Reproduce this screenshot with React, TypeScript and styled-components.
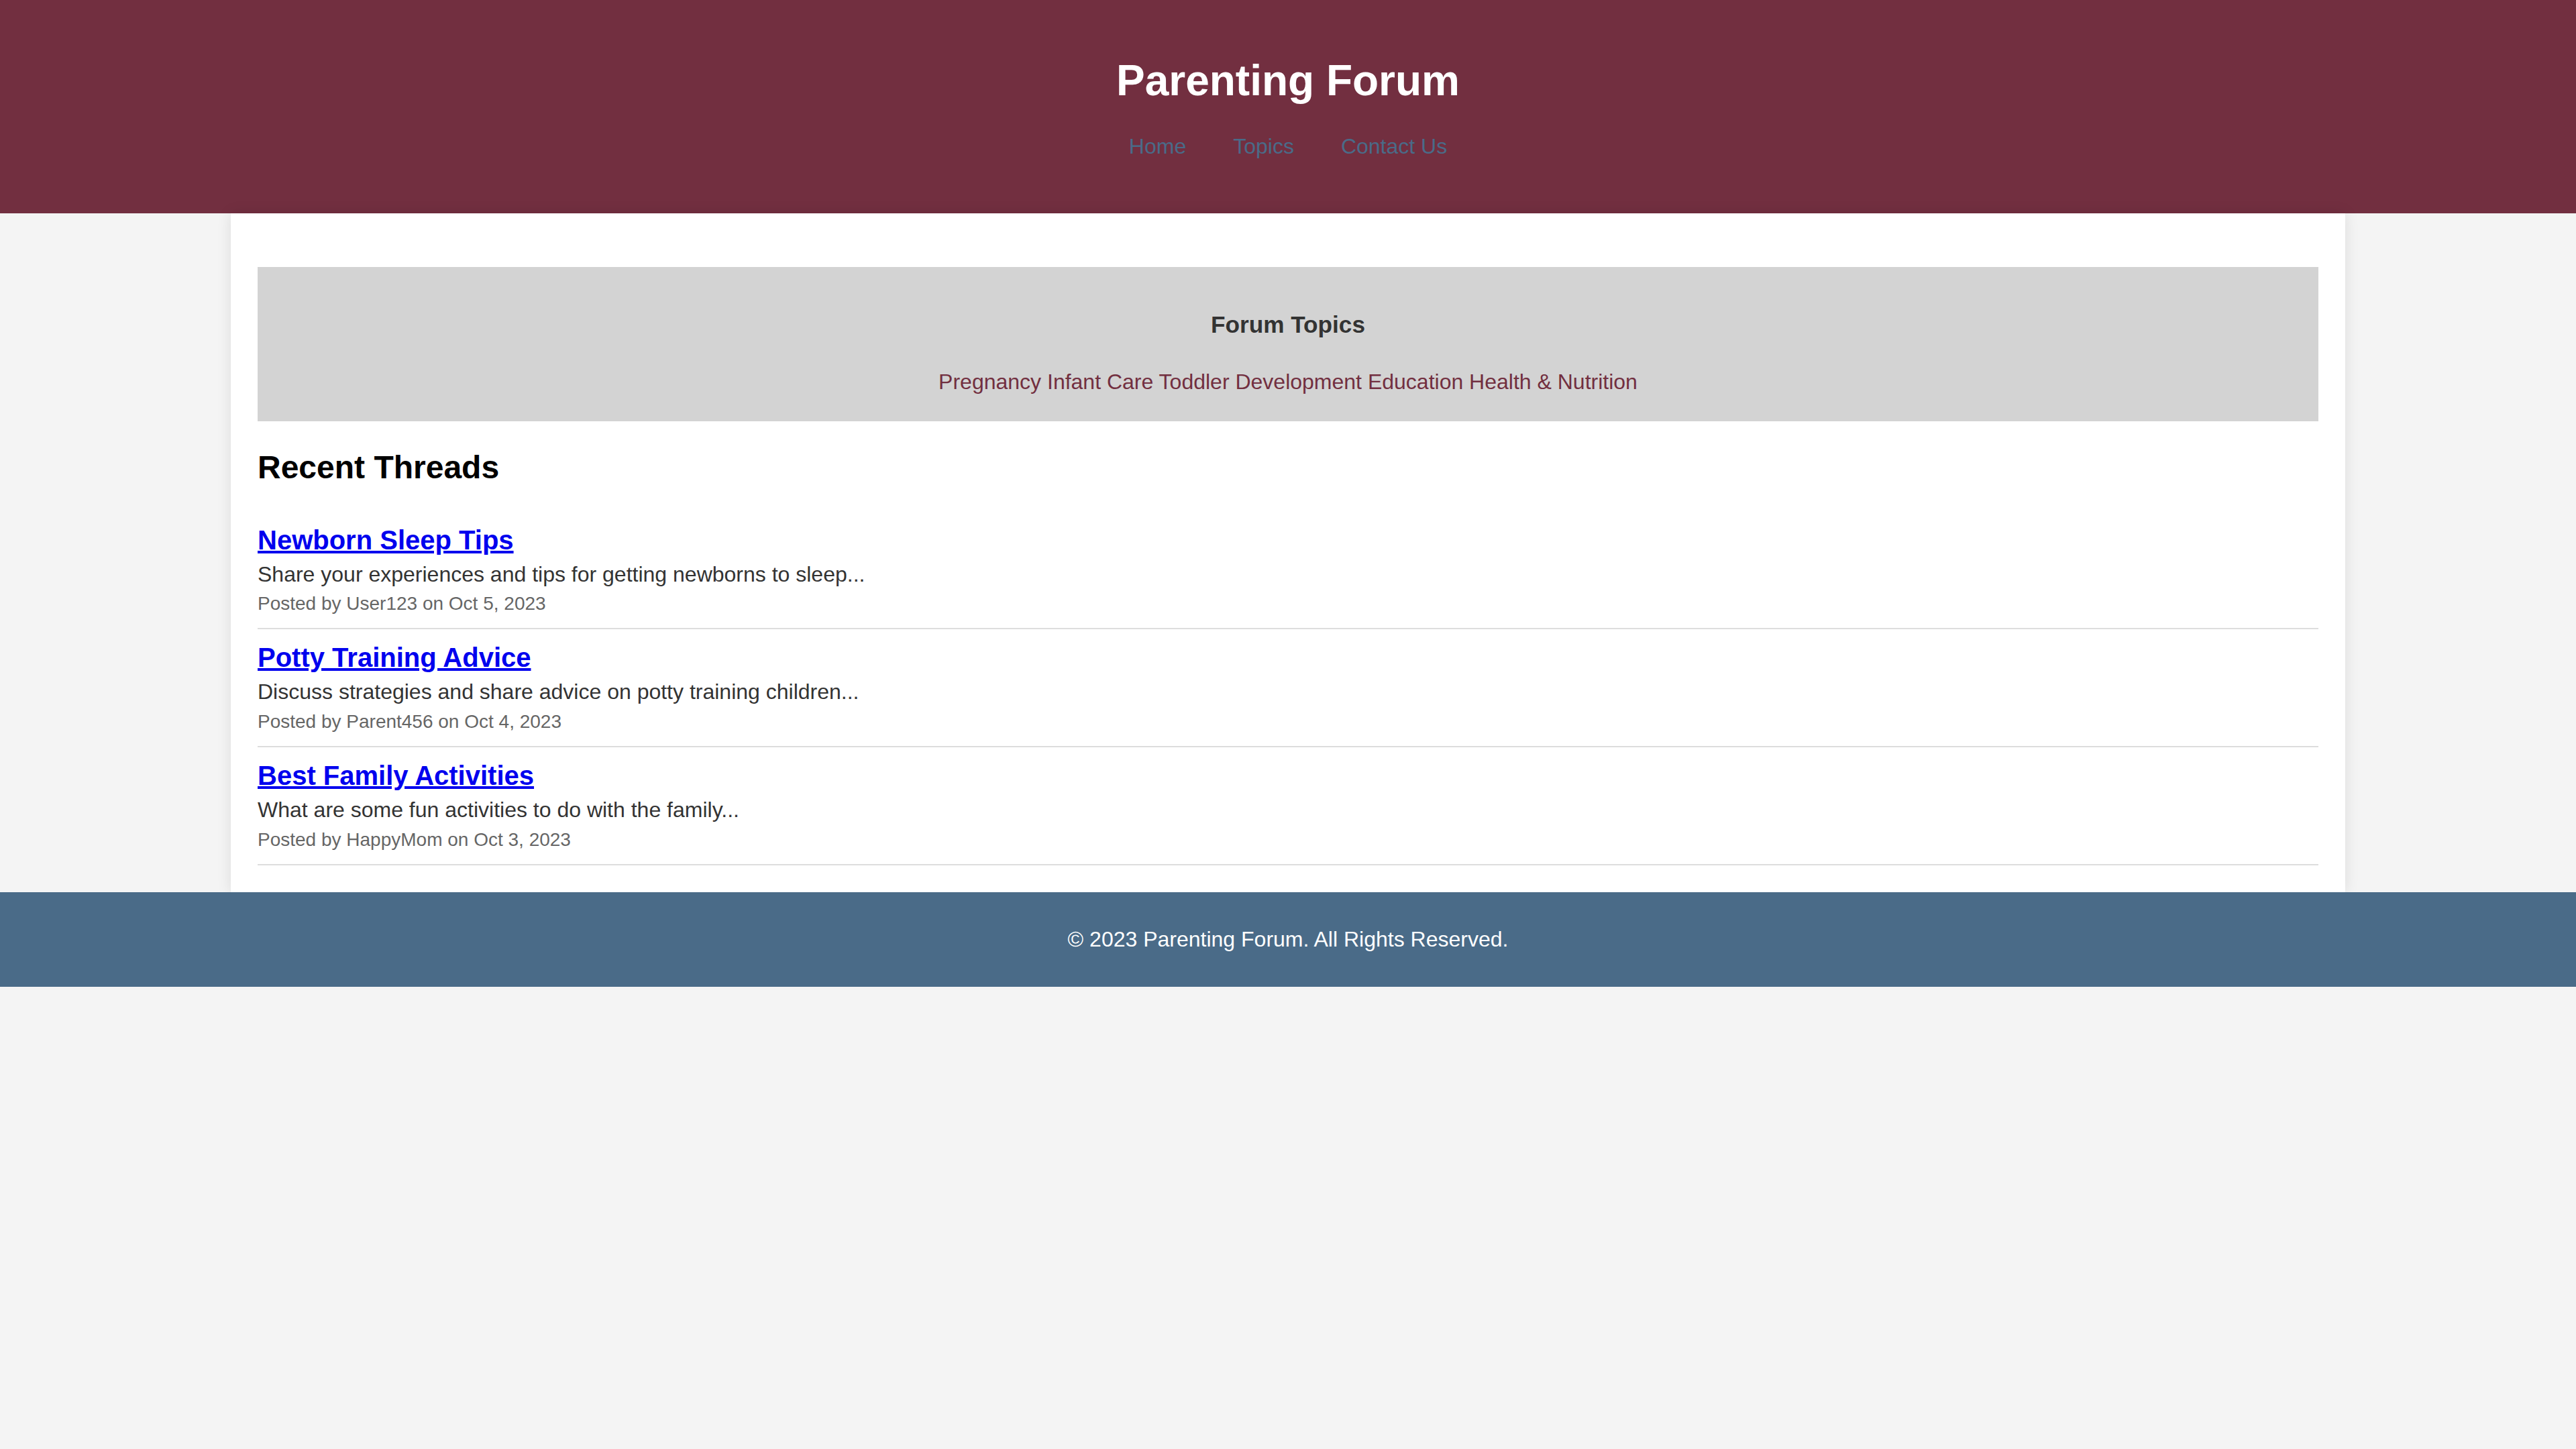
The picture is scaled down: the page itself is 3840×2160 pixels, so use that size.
import React from "react";
import styled, { createGlobalStyle } from "styled-components";

const GlobalStyle = createGlobalStyle`
  html, body {
    margin: 0;
    padding: 0;
    background: #f4f4f4;
    font-family: "Liberation Sans", Arial, Helvetica, sans-serif;
    font-size: 32px;
    color: #000;
  }
`;

const Header = styled.header`
  background: #722f40;
  color: #ffffff;
  padding: 40px;
  text-align: center;
`;

const Title = styled.h1`
  font-size: 64px;
  font-weight: bold;
  margin: 42.88px 0;
`;

const Nav = styled.nav`
  display: flex;
  justify-content: center;
  gap: 70px;
  margin-bottom: 41px;
`;

const NavLink = styled.a`
  color: #4a6b88;
  text-decoration: none;
  font-size: 32px;
`;

const Main = styled.main`
  width: 80%;
  margin: 0 auto;
  padding: 40px;
  background: #ffffff;
  box-shadow: 0 0 20px rgba(0, 0, 0, 0.1);
`;

const TopicsBox = styled.section`
  background: #d3d3d3;
  padding: 28px 40px 40px;
  margin: 40px 0;
  text-align: center;
  color: #333;
`;

const TopicsTitle = styled.h3`
  font-size: 35.2px;
  font-weight: bold;
  margin: 38px 0 47px;
`;

const TopicList = styled.div`
  font-size: 32px;
`;

const TopicLink = styled.a`
  color: #722f40;
  text-decoration: none;
`;

const SectionTitle = styled.h2`
  font-size: 48px;
  font-weight: bold;
  margin: 41px 0 39px;
  color: #000;
`;

const ThreadItem = styled.article`
  padding: 20px 0;
  border-bottom: 2px solid #dddddd;
`;

const ThreadTitle = styled.h3`
  font-size: 40px;
  font-weight: bold;
  margin: 0 0 10px;
`;

const ThreadLink = styled.a`
  color: #0000ee;
  text-decoration: underline;
`;

const ThreadDesc = styled.p`
  font-size: 32px;
  color: #333;
  margin: 0 0 9.7px;
`;

const ThreadMeta = styled.p`
  font-size: 28px;
  color: #666;
  margin: 0;
`;

const Footer = styled.footer`
  background: #4a6b88;
  color: #ffffff;
  text-align: center;
  padding: 20px;
`;

const FooterText = styled.p`
  font-size: 32px;
  margin: 32px 0;
`;

const topics = [
  "Pregnancy",
  "Infant Care",
  "Toddler Development",
  "Education",
  "Health & Nutrition",
];

const threads = [
  {
    title: "Newborn Sleep Tips",
    desc: "Share your experiences and tips for getting newborns to sleep...",
    meta: "Posted by User123 on Oct 5, 2023",
  },
  {
    title: "Potty Training Advice",
    desc: "Discuss strategies and share advice on potty training children...",
    meta: "Posted by Parent456 on Oct 4, 2023",
  },
  {
    title: "Best Family Activities",
    desc: "What are some fun activities to do with the family...",
    meta: "Posted by HappyMom on Oct 3, 2023",
  },
];

export default function App() {
  return (
    <>
      <GlobalStyle />
      <Header>
        <Title>Parenting Forum</Title>
        <Nav>
          <NavLink href="#">Home</NavLink>
          <NavLink href="#">Topics</NavLink>
          <NavLink href="#">Contact Us</NavLink>
        </Nav>
      </Header>
      <Main>
        <TopicsBox>
          <TopicsTitle>Forum Topics</TopicsTitle>
          <TopicList>
            {topics.map((t, i) => (
              <React.Fragment key={t}>
                {i > 0 && " "}
                <TopicLink href="#">{t}</TopicLink>
              </React.Fragment>
            ))}
          </TopicList>
        </TopicsBox>
        <SectionTitle>Recent Threads</SectionTitle>
        {threads.map((th) => (
          <ThreadItem key={th.title}>
            <ThreadTitle>
              <ThreadLink href="#">{th.title}</ThreadLink>
            </ThreadTitle>
            <ThreadDesc>{th.desc}</ThreadDesc>
            <ThreadMeta>{th.meta}</ThreadMeta>
          </ThreadItem>
        ))}
      </Main>
      <Footer>
        <FooterText>© 2023 Parenting Forum. All Rights Reserved.</FooterText>
      </Footer>
    </>
  );
}
